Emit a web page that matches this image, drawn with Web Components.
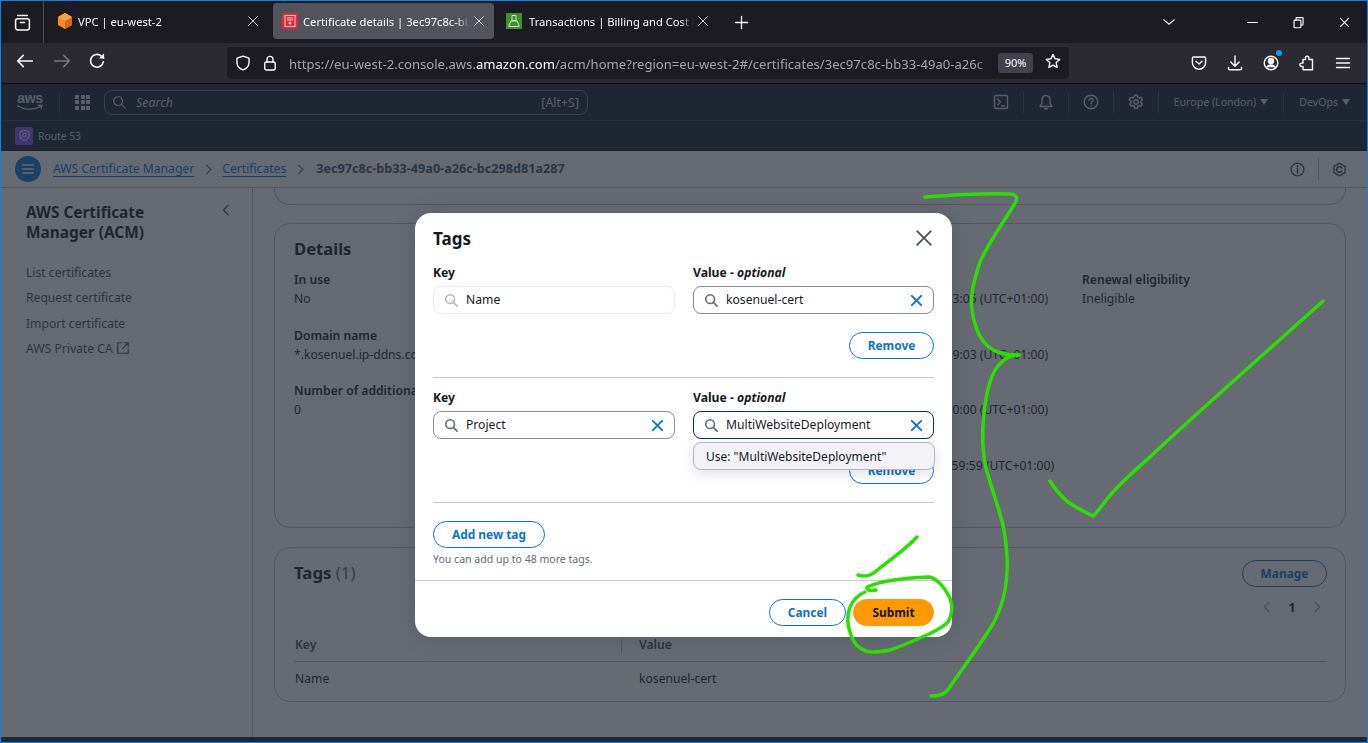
<!DOCTYPE html>
<html lang="en">
<head>
<meta charset="utf-8">
<title>Certificate details</title>
<style>
  html, body { margin: 0; height: 743px; overflow: hidden; background: #1c1b22; }
  body { font-family: "Noto Sans", sans-serif; }
</style>
</head>
<body>
<app-window></app-window>
<script>
// small helper, every element is the same: a shadow root filled from a template
function el(tag, css, markup, setup) {
  const template = document.createElement("template");
  class Component extends HTMLElement {
    constructor() {
      super();
      this.dom = this.attachShadow({ mode: "open" });
      if (!template.innerHTML) {
        const html = typeof markup === "function" ? "" : markup;
        template.innerHTML = `<style>${css}</style>${html}`;
      }
      this.dom.appendChild(document.importNode(template.content, true));
      if (typeof markup === "function") {
        this.dom.appendChild(document.createRange().createContextualFragment(markup(this)));
      }
      if (setup) setup(this);
    }
  }
  customElements.define(tag, Component);
}

const svg = (size, body, weight = 1.4) =>
  `<svg width="${size}" height="${size}" viewBox="0 0 16 16" fill="none" stroke="currentColor" stroke-width="${weight}" stroke-linecap="round" stroke-linejoin="round">${body}</svg>`;

const ic = {
  close: '<path d="M3 3l10 10M13 3L3 13"/>',
  view: '<rect x="1.5" y="4.5" width="13" height="10.5" rx="2"/><path d="M3.5 1.5h9M6 8h4"/>',
  back: '<path d="M14.5 8H1.5M6.5 3l-5 5 5 5"/>',
  fwd: '<path d="M1.5 8h13M9.5 3l5 5-5 5"/>',
  reload: '<path d="M13.6 8.6A5.7 5.7 0 1 1 11.8 3.6L14 5.4"/><path d="M14.3 1.2v4.6H9.8z" fill="currentColor" stroke="none"/>',
  shield: '<path d="M8 1.2l6 2v4.6c0 3.6-2.6 5.9-6 7-3.4-1.1-6-3.4-6-7V3.2z"/>',
  lock: '<rect x="2.8" y="7" width="10.4" height="8" rx="1.4"/><path d="M5 7V4.4a3 3 0 0 1 6 0V7"/>',
  star: '<path d="M8 1.4l2 4.4 4.7.6-3.5 3.2.9 4.8L8 12.1l-4.1 2.3.9-4.8L1.3 6.4 6 5.8z"/>',
  pocket: '<path d="M2.6 2h10.8c.7 0 1.2.5 1.2 1.2v4.2c0 3.9-3 6.9-6.6 6.9S1.400 11.300 1.400 7.400V3.200C1.400 2.500 1.900 2 2.600 2z"/><path d="M5 6.200L8 9l3-2.800"/>',
  download: '<path d="M8 1v10M3.800 7L8 11.200 12.200 7M1.500 12.500v1c0 .8.500 1.300 1.300 1.300h10.400c.8 0 1.300-.5 1.300-1.300v-1"/>',
  profile: '<circle cx="8" cy="8" r="6.800"/><circle cx="8" cy="6" r="2.500" fill="currentColor"/><path d="M3.800 12.200c.8-1.700 2.300-2.300 4.200-2.300s3.400.6 4.200 2.300" fill="currentColor"/>',
  puzzle: '<path d="M6.500 2.800a1.700 1.700 0 0 1 3.400 0V4.500h3.600v10.300H4V11.500H2.600a1.700 1.700 0 0 1 0-3.400H4V4.500h2.500z"/>',
  burger: '<path d="M1.500 3.500h13M1.500 8h13M1.500 12.500h13"/>',
  chev: '<path d="M2 5.500l6 5 6-5"/>',
  min: '<path d="M2 8h12"/>',
  restore: '<rect x="2.500" y="5" width="8.500" height="9.500" rx="1"/><path d="M5 5V2.800c0-.5.300-.8.800-.8h7c.5 0 .8.300.8.800v7.500c0 .5-.3.800-.8.800H11"/>',
  plus: '<path d="M8 1.500v13M1.500 8h13"/>',
  search: '<circle cx="7" cy="7" r="5"/><path d="M10.700 10.700L15 15"/>',
  term: '<rect x="1.500" y="1.500" width="13" height="13" rx="1.500"/><path d="M4.500 5l3 3-3 3M8.500 12h3"/>',
  bell: '<path d="M8 1.500c-2.700 0-4 2-4 4.500v3.500L2 12.500h12l-2-3V6c0-2.500-1.300-4.500-4-4.500zM6.500 14.800h3"/>',
  help: '<circle cx="8" cy="8" r="6.800"/><path d="M6 6.200a2 2 0 1 1 3 1.800c-.7.400-1 .8-1 1.700M8 12v.1"/>',
  gear: '<path d="M6.700 1.300h2.600l.4 1.900 1.500.8 1.800-.6 1.300 2.200-1.400 1.300v1.700l1.400 1.300-1.300 2.200-1.800-.6-1.500.8-.4 1.900H6.700l-.4-1.900-1.500-.8-1.800.6-1.300-2.200 1.400-1.300V7.100L1.200 5.800l1.300-2.200 1.800.6 1.500-.8z"/><circle cx="8" cy="8" r="2.200"/>',
  info: '<circle cx="8" cy="8" r="6.800"/><path d="M8 7v4.500M8 4.300v.4" stroke-width="1.800"/>',
  hexa: '<path d="M8 1.200l5.900 3.400v6.800L8 14.800l-5.900-3.400V4.600z"/><path d="M10.400 6.300A3 3 0 1 0 10.400 9.700" stroke-width="1.800"/>',
  left: '<path d="M10.500 2.500L5 8l5.500 5.500"/>',
  right: '<path d="M5.500 2.500L11 8l-5.500 5.500"/>',
  ext: '<path d="M6.500 2H2v12h12V9.500M9.500 2H14v4.500M14 2L7.500 8.500"/>',
  menu: '<path d="M2 3.500h12M2 8h12M2 12.500h12"/>'
};

// ---- browser chrome
el("win-tab", `
  :host { display: flex; align-items: center; height: 36px; margin-top: 2px; box-sizing: border-box; border-radius: 4px; color: #fbfbfe; font-size: 11.200px; flex: none; }
  :host([active]) { background: #53535e; }
  .t { flex: 1; overflow: hidden; white-space: nowrap; -webkit-mask-image: linear-gradient(90deg,#000 calc(100% - 14px),transparent); mask-image: linear-gradient(90deg,#000 calc(100% - 14px),transparent); }
  .x { display: flex; color: #dcdce0; margin: 0 var(--xm, 8px) 0 2px; }
  ::slotted(svg) { margin: 0 5px 0 9px; flex: none; }
`, () => `<slot name="icon"></slot><span class="t"><slot></slot></span><span class="x">${svg(14, ic.close, 1.1)}</span>`);

el("win-tabs", `
  :host { display: flex; align-items: center; height: 42px; background: #1c1b22; color: #fbfbfe; }
  .view { width: 42px; height: 100%; display: flex; align-items: center; justify-content: center; border-right: 1px solid #4d4d55; }
  .tabs { display: flex; align-items: flex-start; height: 100%; }
  .plus { margin: 14px 0 0 16px; display: flex; }
  .end { margin-left: auto; display: flex; align-items: center; }
  .end span { display: flex; justify-content: center; width: 46px; }
  .end .chev { margin-right: 37px; color: #e6e6e8; }
  win-tab:nth-child(1) { width: 220px; margin: 2px 5px 0 4px; }
  win-tab:nth-child(2) { width: 221px; }
  win-tab:nth-child(3) { width: 221px; margin-left: 3px; }
`, () => `
  <div class="view">${svg(17, ic.view)}</div>
  <div class="tabs">
    <win-tab><svg slot="icon" width="16" height="18" viewBox="0 0 16 18"><path d="M8 1l7 4v8l-7 4-7-4V5z" fill="#f58a2a"/><path d="M8 9l7-4v8l-7 4z" fill="#d9691a"/><path d="M8 9L1 5l7-4 7 4z" fill="#fba14a"/></svg>VPC | eu-west-2</win-tab>
    <win-tab active><svg slot="icon" width="16" height="16" viewBox="0 0 16 16"><rect width="16" height="16" fill="#d92a38"/><rect x="3" y="2.500" width="10" height="11" fill="none" stroke="#f6c8cc" stroke-width="1"/><path d="M5 5h6M5 7h6" stroke="#f6c8cc"/><circle cx="8" cy="10" r="1.500" fill="#f6c8cc"/></svg>Certificate details | 3ec97c8c-bb</win-tab>
    <win-tab><svg slot="icon" width="16" height="16" viewBox="0 0 16 16"><rect width="16" height="16" fill="#3f8f2b"/><path d="M6 2.500h4v5H6zM5 8l-2 4v1.500h10V12l-2-4z" fill="none" stroke="#d5ecca"/></svg><span style="margin-left:2px">Transactions | Billing and Cost M</span></win-tab>
    <span class="plus">${svg(15, ic.plus)}</span>
  </div>
  <div class="end">
    <span class="chev">${svg(14, ic.chev)}</span>
    <span>${svg(13, ic.min)}</span><span>${svg(13, ic.restore)}</span><span>${svg(13, ic.close)}</span>
  </div>`);

el("win-toolbar", `
  :host { display: flex; align-items: center; height: 40px; background: #2b2a33; border-bottom: 1px solid #0c0c0d; color: #fbfbfe; }
  .nav { display: flex; width: 226px; padding-left: 15px; gap: 19px; box-sizing: border-box; }
  .nav .off { color: #77767c; }
  .nav span:last-child { margin-left: -2px; }
  .url { display: flex; align-items: center; width: 842px; height: 32px; background: #1c1b22; border-radius: 4px; box-sizing: border-box; padding-left: 8px; }
  .url svg { flex: none; }
  .text { flex: 1; margin-left: 11px; overflow: hidden; white-space: nowrap; font-size: 13.100px; padding-top: 1px; color: #a3a3a8; -webkit-mask-image: linear-gradient(90deg,#000 calc(100% - 14px),transparent); mask-image: linear-gradient(90deg,#000 calc(100% - 14px),transparent); }
  .text b { font-weight: 400; color: #fbfbfe; }
  .zoom { flex: none; width: 35px; height: 20px; line-height: 20px; text-align: center; background: #42414d; border-radius: 3px; font-size: 11px; margin: 0 12px 0 8px; }
  .star { margin-right: 8px; }
  .tools { display: flex; margin-left: 122px; gap: 20px; }
  .tools span { position: relative; display: flex; }
  .dot { position: absolute; top: -5px; right: -3px; width: 6px; height: 6px; border-radius: 50%; background: #0a9cf5; }
`, () => `
  <div class="nav"><span>${svg(18, ic.back)}</span><span class="off">${svg(18, ic.fwd)}</span><span>${svg(18, ic.reload)}</span></div>
  <div class="url">
    ${svg(16, ic.shield)}<span style="width:11px"></span>${svg(16, ic.lock)}
    <span class="text">https://eu-west-2.console.aws.<b>amazon.com</b>/acm/home?region=eu-west-2#/certificates/3ec97c8c-bb33-49a0-a26c</span>
    <span class="zoom">90%</span><span class="star">${svg(16, ic.star)}</span>
  </div>
  <div class="tools">
    <span>${svg(16, ic.pocket)}</span><span>${svg(16, ic.download)}</span>
    <span>${svg(16, ic.profile)}<i class="dot"></i></span><span>${svg(16, ic.puzzle)}</span><span>${svg(16, ic.burger)}</span>
  </div>`);

// ---- aws console header
el("aws-topnav", `
  :host { display: flex; align-items: center; height: 36px; background: #161e2d; border-bottom: 1px solid #3a4452; color: #d5dbdb; font-size: 10.600px; }
  .logo { position: relative; width: 28px; margin-left: 15px; height: 24px; font: 700 14px/17px "Liberation Sans", sans-serif; letter-spacing: -.3px; text-align: center; }
  .logo svg { position: absolute; left: 0; top: 14px; }
  .sep { width: 1px; height: 22px; background: #414d5c; }
  .grid { display: grid; grid-template-columns: repeat(3, 4px); gap: 1.500px; margin: 0 14px 0 15px; }
  .grid i { width: 4px; height: 4px; background: #d5dbdb; }
  .search { display: flex; align-items: center; width: 484px; height: 25px; border: 1px solid #6d7886; border-radius: 8px; box-sizing: border-box; padding: 0 8px 0 7px; gap: 10px; color: #d5dbdb; font-size: 12.400px; }
  .search em { flex: 1; }
  .right { margin-left: auto; display: flex; align-items: center; padding-right: 17px; }
  .i { display: flex; width: 44px; justify-content: center; }
  .drop { padding: 0 15px; white-space: nowrap; }
  .drop::after { content: ""; display: inline-block; margin-left: 4px; border: 4.500px solid transparent; border-top: 6px solid #d5dbdb; border-bottom: 0; vertical-align: 1px; }
`, () => `
  <div class="logo">aws<svg width="28" height="7" viewBox="0 0 28 7" fill="none" stroke="#d5dbdb" stroke-width="1.300"><path d="M1 1.500c7 4.500 17 5 24 .5M21.500 1.200l4.500.2-1 4"/></svg></div>
  <span class="sep" style="margin-left:15px"></span>
  <div class="grid">${"<i></i>".repeat(9)}</div>
  <div class="search">${svg(14, ic.search)}<em>Search</em><span>[Alt+S]</span></div>
  <div class="right">
    <span class="i">${svg(16, ic.term)}</span><span class="sep"></span>
    <span class="i">${svg(16, ic.bell)}</span><span class="sep"></span>
    <span class="i">${svg(16, ic.help)}</span><span class="sep"></span>
    <span class="i">${svg(16, ic.gear)}</span><span class="sep"></span>
    <span class="drop">Europe (London)</span><span class="sep"></span>
    <span class="drop" style="padding-right:0">DevOps</span>
  </div>`);

el("aws-favbar", `
  :host { display: flex; align-items: center; height: 29px; background: #161e2d; border-bottom: 1px solid #0d121b; padding-left: 14px; gap: 5px; color: #d5dbdb; font-size: 10.300px; }
  .badge { width: 18px; height: 18px; border-radius: 2px; background: #8c4fff; display: flex; align-items: center; justify-content: center; color: #eadcff; }
`, () => `<span class="badge">${svg(13, '<path d="M8 1.500l5.500 2v4.500c0 3-2.500 5-5.500 6.500C5 13 2.500 11 2.500 8V3.500z"/><circle cx="8" cy="7.500" r="2.300"/>')}</span>Route 53`);

el("aws-crumbs", `
  :host { display: flex; align-items: center; height: 36px; box-sizing: content-box; background: #fff; border-bottom: 1px solid #b6bec9; padding-left: 14px; font-size: 12.150px; color: #16191f; }
  .m { width: 26px; height: 26px; border-radius: 50%; background: #0972d3; color: #fff; display: flex; align-items: center; justify-content: center; margin-right: 12px; }
  a { color: #0972d3; text-decoration: underline; text-underline-offset: 3px; margin-top: -2px; }
  .c { display: flex; margin: 0 7.500px; color: #5f6b7a; }
  b { color: #414d5c; font-weight: 700; margin: -2px 0 0 2px; font-size: 12.650px; }
  .r { margin-left: auto; display: flex; align-items: center; color: #414d5c; margin-right: 20px; }
  .sep { width: 1px; height: 22px; background: #b6bec9; margin: 0 13px; }
`, () => `
  <span class="m">${svg(14, ic.menu, 1.8)}</span>
  <a>AWS Certificate Manager</a><span class="c">${svg(13, ic.right)}</span>
  <a>Certificates</a><span class="c">${svg(13, ic.right)}</span>
  <b>3ec97c8c-bb33-49a0-a26c-bc298d81a287</b>
  <span class="r">${svg(15, ic.info)}<span class="sep"></span>${svg(15, ic.hexa)}</span>`);

el("acm-sidenav", `
  :host { display: block; width: 252px; flex: none; box-sizing: border-box; background: #fff; border-right: 1px solid #b6bec9; padding: 15px 0 0 25px; color: #414d5c; font-size: 12.150px; position: relative; }
  h2 { margin: 0 0 21px; font-size: 15.400px; line-height: 20px; font-weight: 700; color: #16191f; width: 160px; }
  p { margin: 0 0 7.300px; line-height: 18px; }
  .col { position: absolute; left: 218px; top: 15px; display: flex; }
  svg { vertical-align: -2px; }
`, () => `
  <h2>AWS Certificate Manager (ACM)</h2><span class="col">${svg(14, ic.left)}</span>
  <p>List certificates</p><p>Request certificate</p><p>Import certificate</p>
  <p>AWS Private CA ${svg(14, ic.ext)}</p>`);

// ---- page cards
el("acm-card", `
  :host { display: block; border: 1px solid #b6bec9; border-radius: 16px; box-sizing: border-box; background: #fff; padding: 0 18px 0 19px; color: #16191f; font-size: 12.150px; }
  :host([stub]) { height: 17px; flex: none; border-top: 0; border-radius: 0 0 16px 16px; }
`, `<slot></slot>`);

el("acm-field", `
  :host { display: block; line-height: 19px; color: #16191f; white-space: nowrap; }
  b { display: block; font-weight: 600; line-height: 18px; }
`, () => `<b><slot name="label"></slot></b><slot></slot>`);

el("acm-details", `
  :host { display: block; flex: none; }
  h2 { margin: 0; font-size: 16.600px; line-height: 22px; font-weight: 700; padding-top: 14px; }
  .grid { display: grid; grid-template-columns: repeat(3, 262.700px) 1fr; grid-auto-rows: 55.500px; margin-top: 11px; }
  .end { grid-column: 3; text-align: right; padding: 18px 34px 0 0; line-height: 19px; white-space: nowrap; }
`, `
  <acm-card style="height:305px">
    <h2>Details</h2>
    <div class="grid">
      <acm-field style="grid-area:1/1"><span slot="label">In use</span>No</acm-field>
      <acm-field style="grid-area:2/1"><span slot="label">Domain name</span>*.kosenuel.ip-ddns.co</acm-field>
      <acm-field style="grid-area:3/1"><span slot="label">Number of additional</span>0</acm-field>
      <acm-field style="grid-area:1/4"><span slot="label">Renewal eligibility</span>Ineligible</acm-field>
      <span class="end" style="grid-row:1">3:05 (UTC+01:00)</span>
      <span class="end" style="grid-row:2">9:03 (UTC+01:00)</span>
      <span class="end" style="grid-row:3">0:00 (UTC+01:00)</span>
      <span class="end" style="grid-row:4;padding-right:28px">59:59 (UTC+01:00)</span>
    </div>
  </acm-card>`);

el("acm-tags", `
  :host { display: block; flex: none; }
  .head { display: flex; justify-content: space-between; align-items: center; padding-top: 12px; }
  h2 { margin: -2px 0 0; font-size: 16.800px; font-weight: 700; }
  h2 span { font-weight: 400; color: #5f6b7a; }
  .pager { display: flex; justify-content: flex-end; align-items: center; gap: 14.500px; margin-top: 10px; padding-right: 3px; color: #9ba7b6; height: 20px; }
  .pager b { color: #16191f; font-size: 12.150px; }
  .row { display: grid; grid-template-columns: 326px 1fr; padding-left: 1px; }
  .th { margin-top: 19px; height: 25px; border-bottom: 1px solid #b6bec9; font-weight: 600; color: #414d5c; align-items: start; line-height: 18px; }
  .th span + span { border-left: 1px solid #b6bec9; padding-left: 17px; }
  .td { line-height: 33px; }
  .td span + span { padding-left: 18px; }
`, `
  <acm-card style="height:155px">
    <div class="head"><h2>Tags <span>(1)</span></h2><pill-btn style="--w:85px">Manage</pill-btn></div>
    <div class="pager"><span style="display:flex">${svg(14, ic.left)}</span><b>1</b><span style="display:flex">${svg(14, ic.right)}</span></div>
    <div class="row th"><span>Key</span><span>Value</span></div>
    <div class="row td"><span>Name</span><span>kosenuel-cert</span></div>
  </acm-card>`);

// ---- modal bits
el("pill-btn", `
  :host { display: inline-block; width: var(--w); height: 27px; line-height: 24px; box-sizing: border-box; border: 1.500px solid #0972d3; border-radius: 14px; background: #fff; text-align: center; font-weight: 700; font-size: 11.900px; color: #0972d3; }
  :host([primary]) { background: #ff9900; border-color: #ff9900; color: #0f141a; }
`, `<slot></slot>`);

el("tag-input", `
  :host { display: flex; align-items: center; height: 28px; box-sizing: border-box; border: 1px solid #8c8c94; border-radius: 8px; padding: 0 9px 0 10px; gap: 8px; color: #16191f; background: #fff; font-size: 12.150px; }
  :host([off]) { border-color: #e9ebed; }
  :host([focus]) { border-color: #033160; }
  .s { display: flex; color: #5f6b7a; }
  :host([off]) .s { color: #b4b7bc; }
  .t { flex: 1; white-space: nowrap; margin-top: -2px; }
  .x { display: flex; color: #0972d3; }
`, (host) => `<span class="s">${svg(14, ic.search, 1.8)}</span><span class="t"><slot></slot></span>${host.hasAttribute("off") ? "" : `<span class="x">${svg(15, ic.close, 2)}</span>`}`);

el("tag-row", `
  :host { display: block; height: 125px; box-sizing: border-box; border-bottom: 1px solid #c6c6cd; padding-top: 11px; position: relative; }
  .g { display: grid; grid-template-columns: 242px 241px; gap: 0 18px; }
  label { display: block; font-weight: 700; font-size: 12.200px; line-height: 17px; margin-bottom: 5px; color: #16191f; }
  em { font-weight: 700; }
  .rm { display: flex; justify-content: flex-end; margin-top: 18px; }
`, (host) => `
  <div class="g">
    <div><label>Key</label><tag-input ${host.hasAttribute("key-off") ? "off" : ""}>${host.getAttribute("k")}</tag-input></div>
    <div><label>Value - <em>optional</em></label><tag-input ${host.hasAttribute("focus") ? "focus" : ""}>${host.getAttribute("v")}</tag-input></div>
  </div>
  <div class="rm"><pill-btn style="--w:85px">Remove</pill-btn></div>
  <slot></slot>`);

el("tags-modal", `
  :host { position: absolute; left: 414px; top: 129px; width: 537px; height: 424px; background: #fff; border-radius: 16px; box-shadow: 0 0 24px rgba(0,7,22,.12); font-size: 12px; color: #16191f; }
  .head { display: flex; justify-content: space-between; align-items: center; height: 40px; padding: 10px 17px 0 18px; box-sizing: border-box; }
  h2 { margin: 0; font-size: 17px; font-weight: 700; }
  .head span { display: flex; color: #414d5c; }
  .body { padding: 0 18px; }
  .use { position: absolute; left: 260px; top: 64px; width: 242px; height: 28px; box-sizing: border-box; line-height: 27px; padding-left: 12px; background: #f3f3f7; border: 1px solid #b4b4bb; border-radius: 8px; box-shadow: 0 4px 14px rgba(0,7,22,.12); white-space: nowrap; }
  .add { display: flex; flex-direction: column; align-items: flex-start; height: 77px; box-sizing: border-box; padding-top: 18px; }
  .add p { margin: 4px 0 0; font-size: 10.550px; line-height: 14px; color: #5f6b7a; }
  .foot { display: flex; justify-content: flex-end; gap: 7px; border-top: 1px solid #c6c6cd; padding: 18px 18px 0; }
`, () => `
  <div class="head"><h2>Tags</h2><span>${svg(22, ic.close, 1.2)}</span></div>
  <div class="body">
    <tag-row k="Name" v="kosenuel-cert" key-off></tag-row>
    <tag-row k="Project" v="MultiWebsiteDeployment" focus><div class="use">Use: "MultiWebsiteDeployment"</div></tag-row>
    <div class="add"><pill-btn style="--w:112px">Add new tag</pill-btn><p>You can add up to 48 more tags.</p></div>
  </div>
  <div class="foot"><pill-btn style="--w:77px">Cancel</pill-btn><pill-btn primary style="--w:81px">Submit</pill-btn></div>`);

// freehand green marks someone drew on top of the screenshot
el("ink-marks", `
  :host { position: absolute; left: -1px; top: -1px; pointer-events: none; }
  svg { display: block; }
  path { fill: none; stroke: #2be000; stroke-width: 3.500; stroke-linecap: round; stroke-linejoin: round; }
`, `
  <svg width="1368" height="743" viewBox="0 0 1368 743">
    <path d="M925 197C950 195 990 193 1010 194C1018 195 1018 199 1014 205C1003 223 990 240 980 262C974 280 970 295 972 310C974 325 978 335 984 342C992 352 1003 355 1019 355"/>
    <path d="M1019 355C1010 355 1005 358 998 366C990 376 985 395 983 425C982 445 983 455 986 468C992 490 998 505 1003 525C1006 540 1008 555 1007 572C1006 590 1003 605 993 624C980 645 965 665 947 691C943 695 938 696 931 696"/>
    <path d="M1323 301C1280 340 1200 410 1150 457C1130 475 1115 488 1104 503C1100 508 1097 513 1093 516C1085 512 1075 507 1068 502C1062 497 1055 489 1050 481"/>
    <path d="M917 537C905 550 890 560 875 572C870 576 864 577 858 575"/>
    <path d="M876 590C870 591 866 590 867 587C880 581 905 578 929 577C937 578 945 588 950 598C953 606 952 615 948 622C942 628 935 631 929 634C915 640 903 646 890 650C880 652 872 653 866 651C858 648 853 642 851 635C847 625 847 615 850 607C853 600 858 595 865 592"/>
  </svg>`);

el("app-window", `
  :host { display: flex; flex-direction: column; position: relative; width: 1368px; height: 743px; box-sizing: border-box; border: 1px solid #0a84e6; overflow: hidden; }
  .console { position: relative; flex: 1; display: flex; flex-direction: column; min-height: 0; }
  .main { flex: 1; display: flex; min-height: 0; background: #fff; }
  .content { flex: 1; min-width: 0; display: flex; flex-direction: column; padding: 0 21px; gap: 18px; }
  .strip { height: 5px; background: #161e2d; }
  .scrim { position: absolute; inset: 0; background: rgba(35,43,55,.7); }
`, `
  <win-tabs></win-tabs>
  <win-toolbar></win-toolbar>
  <div class="console">
    <aws-topnav></aws-topnav>
    <aws-favbar></aws-favbar>
    <aws-crumbs></aws-crumbs>
    <div class="main">
      <acm-sidenav></acm-sidenav>
      <div class="content">
        <acm-card stub></acm-card>
        <acm-details></acm-details>
        <acm-tags style="margin-top:1px"></acm-tags>
      </div>
    </div>
    <div class="strip"></div>
    <div class="scrim"></div>
    <tags-modal></tags-modal>
  </div>
  <ink-marks></ink-marks>`);
</script>
</body>
</html>
